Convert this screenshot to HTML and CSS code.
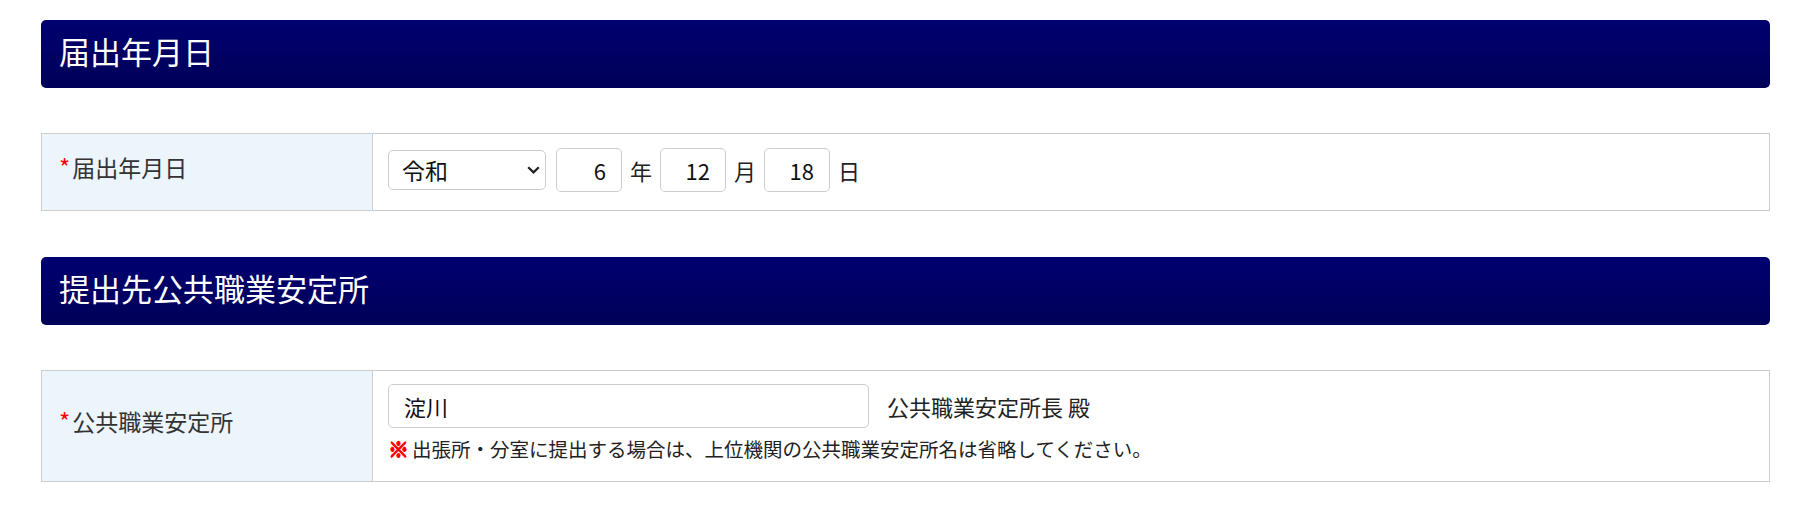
FILE: index.html
```html
<!DOCTYPE html>
<html lang="ja">
<head>
<meta charset="utf-8">
<title>届出</title>
<link rel="stylesheet" href="styles.css">
</head>
<body>
<div class="page">
  <h2 class="section-title">届出年月日</h2>
  <table class="form-table">
    <colgroup><col class="label-col"><col></colgroup>
    <tr>
      <th class="label"><span class="req">*</span>届出年月日</th>
      <td class="field field-date">
        <div class="date-row">
          <div class="select-wrap">
            <select class="era"><option>令和</option></select>
            <svg class="chev" width="13" height="8" viewBox="0 0 13 8"><path d="M1.2 1.2 L6.5 6.4 L11.8 1.2" fill="none" stroke="#222" stroke-width="2.2"/></svg>
          </div>
          <input class="num" type="text" value="6">
          <span class="unit">年</span>
          <input class="num" type="text" value="12">
          <span class="unit">月</span>
          <input class="num" type="text" value="18">
          <span class="unit">日</span>
        </div>
      </td>
    </tr>
  </table>

  <h2 class="section-title">提出先公共職業安定所</h2>
  <table class="form-table">
    <colgroup><col class="label-col"><col></colgroup>
    <tr>
      <th class="label"><span class="req">*</span>公共職業安定所</th>
      <td class="field field-office">
        <div class="office-row">
          <input class="office" type="text" value="淀川">
          <span class="suffix">公共職業安定所長 殿</span>
        </div>
        <p class="note"><span class="mark">※</span>出張所・分室に提出する場合は、上位機関の公共職業安定所名は省略してください。</p>
      </td>
    </tr>
  </table>
</div>
</body>
</html>
```

FILE: styles.css
```css
* { box-sizing: border-box; }
html, body { margin: 0; padding: 0; background: #fff; }
body {
  font-family: "Noto Sans CJK JP", "Noto Sans", sans-serif;
  color: #222;
}
.page {
  padding: 20px 41px 0 41px;
}
.section-title {
  margin: 0 0 45px 0;
  height: 68px;
  display: flex;
  align-items: center;
  padding: 0 0 7px 18px;
  background: linear-gradient(#000070, #000058);
  border-radius: 5px;
  color: #fff;
  font-size: 31px;
  font-weight: normal;
  line-height: 1;
}
.form-table {
  width: 100%;
  border-collapse: collapse;
  table-layout: fixed;
  margin: 0 0 46px 0;
}
.label-col { width: 331px; }
.form-table th, .form-table td {
  border: 1px solid #cdcdcd;
}
.label {
  background: #ecf4fc;
  text-align: left;
  font-weight: normal;
  font-size: 23px;
  color: #333;
  padding: 0 0 9px 17px;
  vertical-align: middle;
  line-height: 1.2;
}
.req { color: #f00; margin-right: 2px; font-size: 24px; }
.field { padding: 14px 15px 18px 15px; vertical-align: top; }
.field-office { padding: 13px 15px 18px 15px; }
.date-row, .office-row {
  display: flex;
  align-items: center;
  gap: 8px;
}
.select-wrap {
  position: relative;
  width: 158px;
  height: 40px;
  margin-right: 2px;
}
.era {
  -webkit-appearance: none;
  appearance: none;
  width: 100%;
  height: 100%;
  border: 1px solid #cdcdcd;
  border-radius: 5px;
  background: #fff;
  font-family: inherit;
  font-size: 23px;
  color: #111;
  padding: 0 0 0 13px;
  line-height: 1;
}
.chev {
  position: absolute;
  right: 6px;
  top: 16px;
  pointer-events: none;
}
.num {
  width: 66px;
  height: 44px;
  border: 1px solid #cdcdcd;
  border-radius: 5px;
  font-family: inherit;
  font-size: 22px;
  color: #111;
  text-align: right;
  padding: 0 15px 0 4px;
}
.unit {
  font-size: 22px;
  color: #222;
  line-height: 1;
}
.office {
  width: 481px;
  height: 44px;
  border: 1px solid #cdcdcd;
  border-radius: 5px;
  font-family: inherit;
  font-size: 22px;
  color: #111;
  padding: 0 15px;
  margin-right: 10px;
}
.suffix {
  font-size: 22px;
  color: #222;
}
.note {
  margin: 6px 0 0 0;
  font-size: 19.5px;
  line-height: 28px;
  color: #222;
}
.mark {
  color: #f00;
  font-weight: 900;
  font-size: 21px;
  margin-right: 3px;
  text-shadow: 0.6px 0 0 #f00, -0.6px 0 0 #f00, 0 0.6px 0 #f00, 0 -0.6px 0 #f00;
}
```
